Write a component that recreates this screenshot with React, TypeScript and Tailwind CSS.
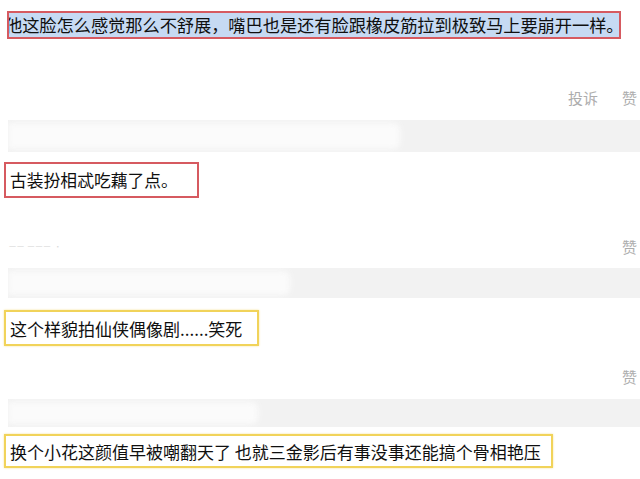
import React from "react";

const font = { fontFamily: '"Noto Sans CJK SC", "Noto Sans", sans-serif' };

function Band({ blob, h }: { blob: string; h: string }) {
  return (
    <div className={`ml-[8px] ${h} bg-[#f2f2f2] relative overflow-hidden`}>
      <div className={`absolute left-0 top-[3px] bottom-[3px] ${blob} bg-[#fbfbfb] blur-[3px] rounded-r-[6px]`} />
    </div>
  );
}

export default function App() {
  return (
    <div className="w-[640px] h-[479px] bg-white overflow-hidden text-[#0f0f0f]" style={font}>
      <div className="pt-[11px]">
        <div className="ml-[7px] w-[614px] h-[28px] border-2 border-[#d65a60] bg-[#c6daf3] overflow-hidden flex items-center">
          <span className="ml-[-4px] whitespace-nowrap text-[17.3px] leading-none tracking-[-0.1px]">
            他这脸怎么感觉那么不舒展，嘴巴也是还有脸跟橡皮筋拉到极致马上要崩开一样。
          </span>
        </div>

        <div className="mt-[50px] h-[17px] flex justify-end items-center gap-[24px] pr-[3px] text-[15px] leading-none text-[#adadad]">
          <span>投诉</span>
          <span>赞</span>
        </div>

        <div className="mt-[14px]">
          <Band blob="w-[392px]" h="h-[32px]" />
        </div>

        <div className="mt-[10px] ml-[4px] w-[195px] h-[36px] border-2 border-[#d65a60] flex items-center pl-[4px]">
          <span className="whitespace-nowrap text-[16.8px] leading-none">古装扮相忒吃藕了点。</span>
        </div>

        <div className="mt-[40px] h-[17px] flex justify-between items-center pl-[9px] pr-[3px] text-[15px] leading-none">
          <span className="text-[7px] text-[#d8d8d8] tracking-[1px]">一一 一一一 ·</span>
          <span className="text-[#adadad]">赞</span>
        </div>

        <div className="mt-[13px]">
          <Band blob="w-[282px]" h="h-[30px]" />
        </div>

        <div className="mt-[12px] ml-[4px] w-[255px] h-[36px] border-2 border-[#f1d35a] shadow-[0_0_2px_#f5e39a] flex items-center pl-[4px]">
          <span className="whitespace-nowrap text-[17px] leading-none">这个样貌拍仙侠偶像剧......笑死</span>
        </div>

        <div className="mt-[22px] h-[17px] flex justify-end items-center pr-[3px] text-[15px] leading-none text-[#adadad]">
          <span>赞</span>
        </div>

        <div className="mt-[14px]">
          <Band blob="w-[250px]" h="h-[28px]" />
        </div>

        <div className="mt-[7px] ml-[4px] w-[549px] h-[34px] border-2 border-[#f1d35a] shadow-[0_0_2px_#f5e39a] flex items-center pl-[4px]">
          <span className="whitespace-nowrap text-[17px] leading-none">换个小花这颜值早被嘲翻天了 也就三金影后有事没事还能搞个骨相艳压</span>
        </div>
      </div>
    </div>
  );
}
